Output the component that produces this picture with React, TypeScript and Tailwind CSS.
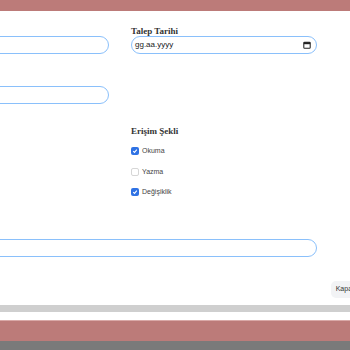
import React from "react";

const serif = { fontFamily: '"Liberation Serif", "DejaVu Serif", serif' };
const sans = { fontFamily: '"Liberation Sans", Arial, sans-serif' };

const inputCls = "h-[18px] w-full rounded-full border-[1.5px] border-[#8ac0fb] bg-white px-[3px] flex items-center";

function Field({ label, children }: { label?: string; children?: React.ReactNode }) {
    return (
        <div className="flex flex-col">
            <label className="h-[10px] text-[9px] leading-[10px] font-bold text-[#333]" style={serif}>
                {label}
            </label>
            {children ?? <div className={inputCls}></div>}
        </div>
    );
}

function Check({ label, checked }: { label: string; checked?: boolean }) {
    return (
        <div className="flex items-center gap-[3px] h-[20.5px]">
            {checked ? (
                <span className="w-[8px] h-[8px] rounded-[2px] bg-[#2f72e4] flex items-center justify-center">
                    <svg width="6" height="6" viewBox="0 0 10 10">
                        <path d="M2 5.2 L4.2 7.3 L8 2.8" fill="none" stroke="white" strokeWidth="1.8" />
                    </svg>
                </span>
            ) : (
                <span className="w-[8px] h-[8px] rounded-[2px] border border-[#d6d6d6] bg-white"></span>
            )}
            <span className="text-[7px] text-[#444]" style={sans}>{label}</span>
        </div>
    );
}

export default function App() {
    return (
        <div className="w-[350px] h-[350px] overflow-hidden bg-white flex flex-col">
            <div className="h-[11px] shrink-0 bg-[#bc7b79]"></div>

            <div className="ml-[-77px] mt-[15px] grid grid-cols-[186px_186px] gap-x-[22px] gap-y-[22px]">
                <Field label="" />
                <Field label="Talep Tarihi">
                    <div className={inputCls + " justify-between pr-[5px]"}>
                        <span className="text-[8px] text-[#222]" style={sans}>gg.aa.yyyy</span>
                        <svg width="8" height="8" viewBox="0 0 10 10">
                            <rect x="1" y="1.5" width="8" height="7.5" rx="1" fill="none" stroke="#222" strokeWidth="1.3" />
                            <rect x="1" y="1.5" width="8" height="2.5" fill="#222" />
                        </svg>
                    </div>
                </Field>
                <Field label="Kullanıcı Adı" />
                <div></div>
                <div></div>
                <div className="flex flex-col">
                    <div className="h-[10px] text-[9px] leading-[10px] font-bold text-[#333]" style={serif}>
                        Erişim Şekli
                    </div>
                    <div className="mt-[5px] flex flex-col">
                        <Check label="Okuma" checked />
                        <Check label="Yazma" />
                        <Check label="Değişiklik" checked />
                    </div>
                </div>
            </div>

            <div className="ml-[-77px] w-[394px] mt-[36px]">
                <div className={inputCls}></div>
            </div>

            <div className="flex justify-end mt-[24px] mr-[-9px]">
                <button className="h-[17px] px-[5px] rounded-[5px] bg-[#f2f3f5] text-[7px] text-[#333]" style={sans}>
                    Kapat
                </button>
            </div>

            <div className="mt-[7px] h-[7px] shrink-0 bg-[#cfcfcf]"></div>
            <div className="h-[8px] shrink-0"></div>
            <div className="h-[21px] shrink-0 bg-[#bc7b79] border-t border-[#d9a9a7]"></div>
            <div className="flex-1 bg-[#7a7a7a]"></div>
        </div>
    );
}
